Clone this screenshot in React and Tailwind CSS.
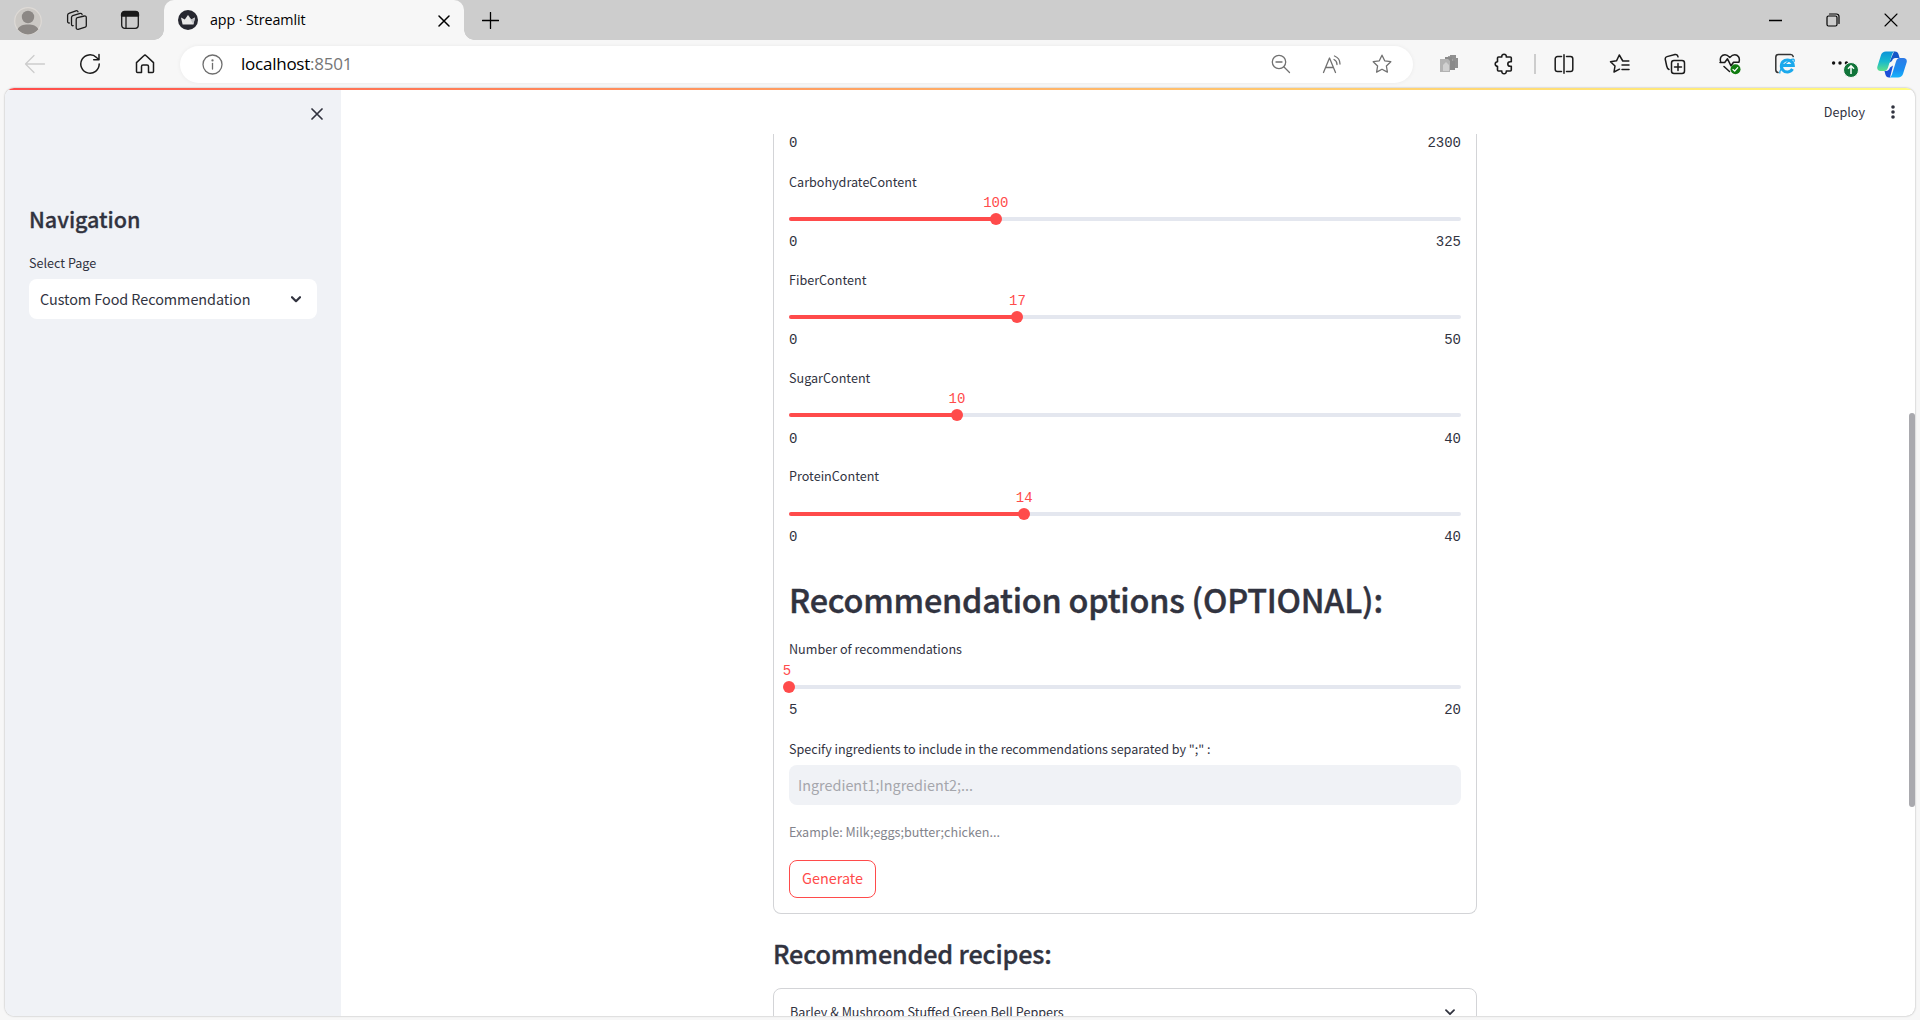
import React from "react";

const sans = "font-['Noto_Sans_CJK_SC','Noto_Sans',sans-serif]";
const mono = "font-['Liberation_Mono',monospace]";
const ui = "font-['Open_Sans','Noto_Sans',sans-serif]";

function Icon({ w = 20, h = 20, sw = 1.3, className = "", children }) {
  return (
    <svg width={w} height={h} viewBox={`0 0 ${w} ${h}`} fill="none" stroke="currentColor" strokeWidth={sw} strokeLinecap="round" strokeLinejoin="round" className={`block shrink-0 ${className}`}>
      {children}
    </svg>
  );
}

const STAR = "M10 1.2l2.7 5.6 6.1.9-4.4 4.3 1 6.1-5.4-2.9-5.4 2.9 1-6.1L1.2 7.7l6.1-.9z";

function TabStrip() {
  return (
    <div className="flex h-10 shrink-0 bg-[#cdcdcd] text-[#1b1b1b]">
      <div className="flex h-10 w-[164px] items-center pl-[14px]">
        <svg width="28" height="28" viewBox="0 0 28 28" className="mt-0.5 block">
          <circle cx="14" cy="14" r="13.3" fill="#cbc8c4" stroke="#dedad6" strokeWidth="1.2" />
          <circle cx="14" cy="10" r="6.2" fill="#8c8885" />
          <path d="M3.6 22.3C5.5 18.8 9 17.6 14 17.6s8.500 1.200 10.400 4.700A13.300 13.300 0 0 1 14 27.400a13.300 13.300 0 0 1-10.400-5.100z" fill="#8c8885" />
        </svg>
        <Icon w={22} h={22} className="ml-[24px]">
          <path d="M11.500 8.700l6.800-1.700a1.500 1.500 0 0 1 2 1.500v8.200a1.600 1.600 0 0 1-1.100 1.500l-7 2.100a1.500 1.500 0 0 1-2-1.500v-8.400a1.700 1.700 0 0 1 1.300-1.700z" />
          <path d="M7.200 16.700c-1 .2-1.700-.4-1.700-1.500V8.500c0-1 .5-1.500 1.300-1.800l7.300-2.300c1-.3 1.900.2 2 1.200M3.300 14c-1.100.1-1.700-.5-1.700-1.600V6.200c0-.9.4-1.500 1.300-1.800l7-2.600c1-.3 1.800.1 2.100 1" />
        </Icon>
        <Icon w={20} h={20} className="ml-[32px]">
          <rect x="1.700" y="1.700" width="16.600" height="16.600" rx="3" />
          <path d="M1.500 6V4.500a3 3 0 0 1 3-3h11a3 3 0 0 1 3 3V6z" fill="currentColor" />
          <path d="M6 6v12" />
        </Icon>
      </div>
      <div className="relative flex w-[300px] items-center rounded-t-[10px] bg-[#f7f7f7] pl-[14px]">
        <span className="absolute bottom-0 left-0 h-[10px] w-[10px] -translate-x-full bg-[radial-gradient(circle_at_0_0,#cdcdcd_9.500px,#f7f7f7_10px)]" />
        <span className="absolute right-0 bottom-0 h-[10px] w-[10px] translate-x-full bg-[radial-gradient(circle_at_100%_0,#cdcdcd_9.500px,#f7f7f7_10px)]" />
        <svg width="20" height="20" viewBox="0 0 20 20" className="block">
          <circle cx="10" cy="10" r="10" fill="#262730" />
          <path d="M3 7.500l3.800 2L10 5l3.200 4.500 3.800-2-1.600 7H4.600z" fill="#e8e8e8" />
          <path d="M10 5l3.200 4.500 3.800-2-1.600 7z" fill="#bfc0c4" />
        </svg>
        <span className={`${ui} ml-3 w-[220px] text-[14.300px] tracking-[-0.100px] whitespace-nowrap text-black`}>app · Streamlit</span>
        <Icon w={12} h={12} sw={1.5} className="mt-px ml-[8px] text-black"><path d="M1 1l10 10M11 1L1 11" /></Icon>
      </div>
      <div className="flex flex-1 items-center pl-[18px]">
        <Icon w={17} h={17} className="text-black"><path d="M8.500.5v16M.5 8.500h16" /></Icon>
        <div className="ml-auto flex items-center pr-[22px] text-black">
          <Icon w={13} h={13} className="mr-[44px]"><path d="M0 6.500h13" /></Icon>
          <Icon w={14} h={14} sw={1.200} className="mr-[44px]">
            <rect x="1" y="3" width="10" height="10" rx="1.500" />
            <path d="M3.500 1h7A2.500 2.500 0 0 1 13 3.500v7" />
          </Icon>
          <Icon w={14} h={14} sw={1.100}><path d="M1 1l12 12M13 1L1 13" /></Icon>
        </div>
      </div>
    </div>
  );
}

function Toolbar() {
  return (
    <div className="flex h-12 shrink-0 items-center bg-[#f7f7f7] pl-6 text-[#1b1b1b]">
      <Icon w={22} className="text-[#cdcdcd]"><path d="M20.500 10H1.500M10 1.500L1.500 10l8.500 8.500" /></Icon>
      <Icon w={22} h={22} sw={1.500} className="ml-[33px]"><path d="M20.200 11A9.200 9.200 0 1 1 17.500 4.500L20 6.800M20 1.500v5.300h-5.300" /></Icon>
      <Icon w={20} h={20} sw={1.500} className="ml-[34px]"><path d="M1.500 8.600L8.800 1.700a1.700 1.700 0 0 1 2.400 0l7.300 6.900v8.900a1 1 0 0 1-1 1h-4v-6a1.500 1.500 0 0 0-1.500-1.500H8a1.500 1.500 0 0 0-1.500 1.500v6h-4a1 1 0 0 1-1-1z" /></Icon>
      <div className="ml-[25px] flex h-[37px] w-[1233px] items-center rounded-full bg-white pl-[22px] shadow-[0_0_4px_rgba(0,0,0,0.06)]">
        <Icon w={21} h={21} className="text-[#6e6e6e]">
          <circle cx="10.500" cy="10.500" r="9.500" />
          <path d="M10.500 9.500v5.500" /><circle cx="10.500" cy="6.400" r=".5" fill="currentColor" />
        </Icon>
        <span className={`${ui} ml-[18px] text-[17px] leading-6 tracking-[-0.240px] text-black`}>localhost<span className="text-[#767676]">:8501</span></span>
        <div className="ml-auto flex items-center pr-[21px] text-[#717171]">
          <Icon w={20} h={20}><circle cx="8" cy="8" r="6.700" /><path d="M13 13l5.500 5.500M5 8h6" /></Icon>
          <Icon w={22} h={20} className="ml-[31px]">
            <path d="M1.500 18.500L7.500 4l6 14.500M3.500 13.500h8M12 5.500c2 1 3 2.800 3 5M12.500 2c3.300 1.300 5.500 4 5.500 8" />
          </Icon>
          <Icon w={20} h={20} className="ml-[28px]"><path d={STAR} /></Icon>
        </div>
      </div>
      <svg width="20" height="20" viewBox="0 0 20 20" className="ml-[27px] block">
        <path d="M8 2h7v10H8z" fill="#a2a2a2" /><path d="M10 1h6v3h2v10h-5V5h-3z" fill="#909090" />
        <path d="M5 3h7v4h3v9H5z" fill="#8a8a8a" /><path d="M0 5h8l2 2v11H0z" fill="#b3b3b3" />
        <path d="M3 11l3-3 3 3v6H3z" fill="#d0d0d0" />
      </svg>
      <Icon w={20} h={22} sw={1.600} className="ml-[34px]">
        <path d="M4.500 4h3.300a2.300 2.300 0 1 1 4.500 0h4a1 1 0 0 1 1 1v3.700h-1.200a2.300 2.300 0 0 0 0 4.600h1.200V17a1 1 0 0 1-1 1h-4a2.300 2.300 0 1 1-4.500 0H4.500a1 1 0 0 1-1-1v-3.700a2.300 2.300 0 1 1 0-4.600V5a1 1 0 0 1 1-1z" />
      </Icon>
      <span className="ml-[20px] h-5 w-[2px] bg-[#cdcdcd]" />
      <Icon w={20} h={20} sw={1.500} className="ml-[18px]"><path d="M7.500 2.500h-4a2.300 2.300 0 0 0-2.300 2.300v10.400a2.300 2.300 0 0 0 2.300 2.300h4M12.500 2.500h4a2.300 2.300 0 0 1 2.300 2.300v10.400a2.300 2.300 0 0 1-2.300 2.300h-4M10 .8v18.400" /></Icon>
      <Icon w={22} h={20} sw={1.500} className="ml-[35px]"><path d="M19.800 7h-6L10.300 1 7.500 6.800l-6 .9 4.500 4.300-1 6 5.500-2.800M13 11h7M13 15.500h7" /></Icon>
      <Icon w={22} h={22} sw={1.500} className="ml-[33px]">
        <rect x="7.500" y="7.500" width="13" height="13" rx="2.500" /><path d="M14 10.500v7M10.500 14h7M5 16.500C3.500 15.800 3 14.500 2.700 13L1.300 6.500C1 5 1.500 4 3 3.600L11 1.500c1.500-.4 2.600.4 3 2.300" />
      </Icon>
      <svg width="22" height="22" viewBox="0 0 22 22" fill="none" stroke="currentColor" strokeWidth="1.500" strokeLinejoin="round" strokeLinecap="round" className="ml-[33px] block">
        <path d="M1.700 9C.3 4.500 3 1.700 6 1.700c2.300 0 3.500 1.300 4.800 2.700 1.300-1.400 2.700-2.700 5-2.700 3 0 5.500 3 4.200 7.300M1 9.500h4.700l2.800-3.700 3.500 7 2.500-3.600H20M5 13.500l5.500 5" />
        <circle cx="16.500" cy="16.300" r="5" fill="#107c10" stroke="none" /><path d="M14 16.500l1.700 1.500 3-3.300" stroke="#fff" strokeWidth="1.200" />
      </svg>
      <svg width="22" height="22" viewBox="0 0 22 22" fill="none" className="ml-[33px] block">
        <path d="M4 19.500a2.700 2.700 0 0 1-2.200-2.700V4.200A2.700 2.700 0 0 1 4.500 1.500h12a2.700 2.700 0 0 1 2.700 2" stroke="#333" strokeWidth="1.500" strokeLinecap="round" />
        <path d="M18.500 16a6 6 0 1 1 .8-3.500H8.500" stroke="#1ba9ec" strokeWidth="3" />
        <path d="M6 20.500c-1-2 2.500-8.500 9.500-13 3.500-2 5.500-2 4.500 1.500" stroke="#1ba9ec" strokeWidth="1.300" />
      </svg>
      <svg width="28" height="28" viewBox="0 0 28 28" className="mt-[5px] ml-[35px] block">
        <circle cx="2.600" cy="10" r="1.700" fill="#111" /><circle cx="9" cy="10" r="1.700" fill="#111" /><circle cx="15.400" cy="10" r="1.700" fill="#111" />
        <circle cx="20" cy="17" r="7.500" fill="#11753a" stroke="#f7f7f7" strokeWidth="1" />
        <path d="M20 21v-8M17 15.800l3-3 3 3" fill="none" stroke="#fff" strokeWidth="1.500" />
      </svg>
      <svg width="30" height="27" viewBox="0 0 30 27" className="ml-[18px] block">
        <defs>
          <linearGradient id="cpA" x1="0" y1="0" x2="0" y2="1"><stop offset="0" stopColor="#0b93d8" /><stop offset=".5" stopColor="#16b8cf" /><stop offset="1" stopColor="#5fe08a" /></linearGradient>
          <linearGradient id="cpB" x1="0" y1="0" x2="0" y2="1"><stop offset="0" stopColor="#2f7be6" /><stop offset=".6" stopColor="#1a8df0" /><stop offset="1" stopColor="#16b4fb" /></linearGradient>
        </defs>
        <path d="M17 .5h1c2 0 3 1.200 3.600 3l1 3.500h-4c-2 0-3 1-3.600 3l-3 2z" fill="#1557c7" />
        <path d="M13 26.500h-1c-2 0-3-1.200-3.600-3L7.500 20H9c2 0 3.200-1.200 4-3.500l3-2z" fill="#1b4fd8" />
        <path d="M9 .5h9c-1.500 0-2.500 1.500-3.200 3.700L11 16.500C10.300 18.800 9.200 20 7.500 20h-4C.8 20-.3 18 .4 15.400L4 4C4.800 1.700 6.500.5 9 .5z" fill="url(#cpA)" />
        <path d="M21 26.500h-9c1.500 0 2.500-1.500 3.200-3.700L19 10.500C19.700 8.200 20.800 7 22.500 7h4c2.700 0 3.800 2 3.100 4.600L26 23c-.8 2.300-2.500 3.500-5 3.500z" fill="url(#cpB)" />
      </svg>
    </div>
  );
}

function Ticks({ min, max }) {
  return (
    <div className={`${mono} flex h-[18px] items-center justify-between text-[14px] leading-[18px]`}>
      <span>{min}</span><span>{max}</span>
    </div>
  );
}

function Slider({ label, value, min, max }) {
  const pct = ((value - min) / (max - min)) * 100;
  return (
    <div className="h-[98.200px] shrink-0">
      <div className="flex h-6 items-center text-[12.600px]">{label}</div>
      <div className="relative mt-[23px] h-1 rounded-full bg-[#e4e7ef]">
        <div className="h-1 rounded-full bg-[#ff4b4b]" style={{ width: `${pct}%` }} />
        <div className="absolute -top-1 h-3 w-3 -translate-x-1/2 rounded-full bg-[#ff4b4b]" style={{ left: `${pct}%` }} />
        <div className={`${mono} absolute -top-[23px] -translate-x-1/2 text-[14px] leading-[18px] text-[#ff4b4b]`} style={{ left: pct === 0 ? "-2px" : `${pct}%` }}>{value}</div>
      </div>
      <div className="pt-[12.300px]"><Ticks min={min} max={max} /></div>
    </div>
  );
}

const sliders = [
  { label: "CarbohydrateContent", value: 100, min: 0, max: 325 },
  { label: "FiberContent", value: 17, min: 0, max: 50 },
  { label: "SugarContent", value: 10, min: 0, max: 40 },
  { label: "ProteinContent", value: 14, min: 0, max: 40 },
];

function Sidebar() {
  return (
    <aside className="flex w-[336px] shrink-0 flex-col bg-[#f0f2f6] px-6">
      <div className="flex h-[50px] items-center justify-end pt-px">
        <Icon w={12} h={12} sw={1.700} className="-mr-[6px]"><path d="M1 1l10 10M11 1L1 11" /></Icon>
      </div>
      <h1 className="mt-[63px] flex h-9 items-center text-[21.600px] font-medium tracking-[-0.050px] [-webkit-text-stroke:0.300px_#31333f]">Navigation</h1>
      <div className="mt-[14px] flex h-6 items-center text-[12.600px]">Select Page</div>
      <div className="mt-[4px] flex h-10 items-center justify-between rounded-lg bg-white pr-4 pl-[11px] text-[14.400px] tracking-[-0.050px]">
        Custom Food Recommendation
        <Icon w={10} h={7} sw={2.200}><path d="M1 1.200l4 4 4-4" /></Icon>
      </div>
    </aside>
  );
}

export default function App() {
  return (
    <div className={`${sans} flex h-[1020px] w-[1920px] flex-col overflow-hidden bg-[#f7f7f7] text-[#31333f]`}>
      <TabStrip />
      <Toolbar />
      <div className="relative mx-[5px] flex h-[928px] shrink-0 overflow-hidden rounded-[9px] bg-white shadow-[0_0_2px_rgba(0,0,0,0.35)]">
        <div className="absolute inset-x-0 top-0 h-[2px] bg-linear-to-r from-[#ff4b4b] to-[#fffd80]" />
        <Sidebar />
        <main className="flex flex-1 flex-col">
          <header className="flex h-[46px] shrink-0 items-center justify-end pr-[20px]">
            <span className="mt-[2px] text-[12.600px]">Deploy</span>
            <svg width="4" height="14" viewBox="0 0 4 14" fill="#31333f" className="mt-px ml-[26px] block"><circle cx="2" cy="2" r="1.800" /><circle cx="2" cy="7" r="1.800" /><circle cx="2" cy="12" r="1.800" /></svg>
          </header>
          <div className="ml-[432px] flex min-h-0 w-[704px] flex-1 flex-col overflow-hidden">
            <section className="flex h-[780px] shrink-0 flex-col rounded-b-lg border border-t-0 border-[#d3d4d7] px-[15px]">
              <div className="h-9 shrink-0"><Ticks min={0} max={2300} /></div>
              {sliders.map((s) => <Slider key={s.label} {...s} />)}
              <h2 className="flex h-[75.200px] shrink-0 items-center pb-[2px] text-[32.400px] font-medium tracking-[-0.210px] [-webkit-text-stroke:0.450px_#31333f]">Recommendation options (OPTIONAL):</h2>
              <Slider label="Number of recommendations" value={5} min={5} max={20} />
              <div className="mt-[1.200px] flex h-6 shrink-0 items-center text-[12.600px] tracking-[-0.020px]">Specify ingredients to include in the recommendations separated by ";" :</div>
              <div className="mt-[4px] flex h-10 shrink-0 items-center rounded-lg bg-[#f0f2f6] px-[9px] pb-[2px] text-[14.400px] text-[#a5a6ac]">Ingredient1;Ingredient2;...</div>
              <div className="mt-[15px] flex h-6 shrink-0 items-center text-[12.600px] text-[#83848c]">Example: Milk;eggs;butter;chicken...</div>
              <button className="mt-[16px] flex h-[38px] w-[87px] shrink-0 items-center justify-center rounded-lg border border-[#ff4b4b] pb-[3px] text-[14.400px] text-[#ff4b4b]">Generate</button>
            </section>
            <h3 className="mt-[20px] mb-[2px] flex h-10 shrink-0 items-center text-[25.200px] font-medium tracking-[-0.160px] [-webkit-text-stroke:0.350px_#31333f]">Recommended recipes:</h3>
            <section className="mt-[12px] flex h-[50px] shrink-0 items-center justify-between rounded-lg border border-[#d3d4d7] pr-[21px] pb-[2px] pl-4 text-[12.600px]">
              <span>Barley &amp; Mushroom Stuffed Green Bell Peppers</span>
              <Icon w={10} h={7} sw={1.800}><path d="M1 1.200l4 4 4-4" /></Icon>
            </section>
          </div>
        </main>
        <div className="absolute top-[325px] right-0 h-[394px] w-[6px] rounded-full bg-[#a9a9ae]" />
      </div>
    </div>
  );
}
